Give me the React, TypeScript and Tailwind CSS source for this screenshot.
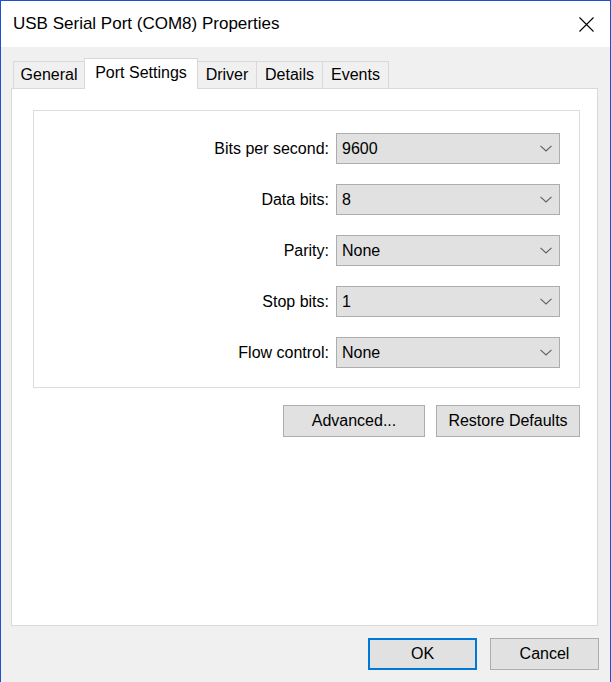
const font = "font-['Segoe_UI','Liberation_Sans',Arial,sans-serif]";

const tabs = [
  { label: "General", w: "w-[72px]" },
  { label: "Port Settings", w: "w-[114px]", active: true },
  { label: "Driver", w: "w-[60px]" },
  { label: "Details", w: "w-[67px]" },
  { label: "Events", w: "w-[67px]" },
];

const rows = [
  { label: "Bits per second:", value: "9600" },
  { label: "Data bits:", value: "8" },
  { label: "Parity:", value: "None" },
  { label: "Stop bits:", value: "1" },
  { label: "Flow control:", value: "None" },
];

function Chevron() {
  return (
    <svg width="12" height="7" viewBox="0 0 12 7" className="shrink-0">
      <path d="M0.5 0.8 L6 6 L11.5 0.8" fill="none" stroke="#606060" strokeWidth="1.1" />
    </svg>
  );
}

function Combo({ value }: { value: string }) {
  return (
    <div className="flex h-[31px] w-[224px] items-center justify-between border border-[#adadad] bg-[#e1e1e1] pl-[5px] pr-[7px] text-[16px] text-black">
      <span>{value}</span>
      <Chevron />
    </div>
  );
}

function Button({ label, w, primary }: { label: string; w: string; primary?: boolean }) {
  return (
    <button
      className={`flex h-[32px] ${w} items-center justify-center bg-[#e1e1e1] text-[16px] text-black ${
        primary ? "border-2 border-[#0078d7]" : "border border-[#adadad]"
      }`}
    >
      {label}
    </button>
  );
}

export default function App() {
  return (
    <div className={`${font} flex h-[682px] w-[611px] flex-col border-x border-t border-[#1b52d1] bg-[#f0f0f0]`}>
      {/* title bar */}
      <div className="flex h-[46px] shrink-0 items-center justify-between bg-white pl-3 pr-[16px]">
        <span className="text-[17px] text-black">USB Serial Port (COM8) Properties</span>
        <svg width="15" height="15" viewBox="0 0 15 15">
          <path d="M0.5 0.5 L14.5 14.5 M14.5 0.5 L0.5 14.5" stroke="#000" strokeWidth="1.1" />
        </svg>
      </div>

      {/* tabs */}
      <div className="ml-[12px] mt-[11px] flex h-[30px] items-end">
        {tabs.map((t, i) => (
          <div
            key={t.label}
            className={`flex ${t.w} items-center justify-center border-x border-t border-[#d9d9d9] text-[16px] text-black ${
              i > 0 ? "-ml-px" : ""
            } ${t.active ? "relative z-10 -mb-px h-[31px] bg-white pb-[2px]" : "h-[27px] bg-[#f0f0f0]"}`}
          >
            {t.label}
          </div>
        ))}
      </div>

      {/* tab panel */}
      <div className="ml-[10px] flex h-[538px] w-[587px] flex-col border border-[#d9d9d9] bg-white">
        <div className="ml-[21px] mt-[21px] flex h-[278px] w-[547px] flex-col gap-[20px] border border-[#dcdcdc] pr-[19px] pt-[22px]">
          {rows.map((r) => (
            <div key={r.label} className="flex items-center justify-end gap-[7px]">
              <span className="text-[16px] text-black">{r.label}</span>
              <Combo value={r.value} />
            </div>
          ))}
        </div>
        <div className="mt-[17px] flex justify-end gap-[11px] pr-[17px]">
          <Button label="Advanced..." w="w-[142px]" />
          <Button label="Restore Defaults" w="w-[144px]" />
        </div>
      </div>

      {/* dialog buttons */}
      <div className="mt-[12px] flex justify-end gap-[13px] pr-[11px]">
        <Button label="OK" w="w-[109px]" primary />
        <Button label="Cancel" w="w-[109px]" />
      </div>
    </div>
  );
}
